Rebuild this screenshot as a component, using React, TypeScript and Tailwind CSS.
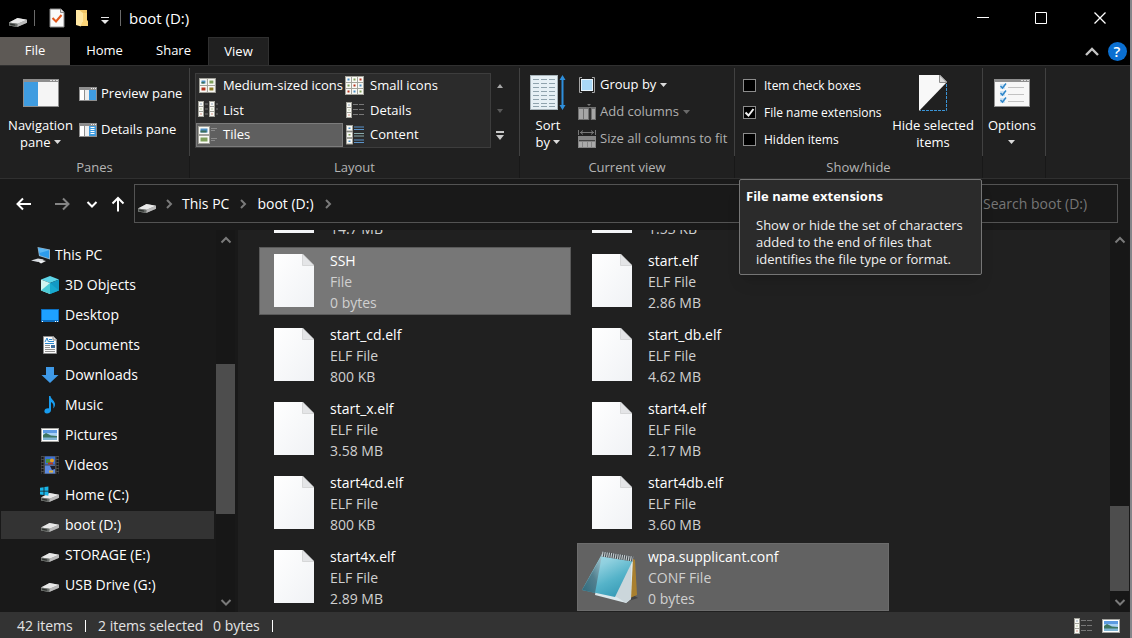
import React from "react";

type IconProps = { className?: string };

/* ---------- shared glyphs ---------- */

function DriveIcon({ windows = false }: { windows?: boolean }) {
  return (
    <svg width="20" height="18" viewBox="0 0 20 18" aria-hidden="true">
      <path d="M1 11.5 9.5 7l9.500 1.800v3L9 16 1 14.500z" fill="#8a8a8a" />
      <path d="M1 11.500 9.500 7l9.500 1.800L9.500 12.800z" fill="#e9e9e9" />
      <path d="M9.500 12.800 19 8.800v3L9.200 16z" fill="#b9b9b9" />
      <path d="M1 11.500l8.500 1.300L9.200 16 1 14.600z" fill="#6b6f6c" />
      <path d="M2.200 12.600l5 .8v1.400l-5-.9z" fill="#2c302d" />
      {windows && (
        <path d="M0 1.800 3.600 1.200v3.600H0zM4.400 1.100 8.400.5v4.300h-4zM0 5.600h3.600v3.500L0 8.600zM4.400 5.600h4v4.100l-4-.6z" fill="#19b5e8" />
      )}
    </svg>
  );
}

function Caret({ className = "fill-[#dcdcdc]" }: IconProps) {
  return (
    <svg width="7" height="4" viewBox="0 0 7 4" className={`inline-block ${className}`} aria-hidden="true">
      <path d="M0 0h7L3.500 4z" />
    </svg>
  );
}

type Direction = "up" | "down" | "left" | "right";
const chevronPath: Record<Direction, string> = {
  up: "M1.500 7.500 6 3l4.500 4.500",
  down: "M1.500 4 6 8.500 10.500 4",
  left: "M8 1.500 3.500 6 8 10.500",
  right: "M4 2l4 4-4 4",
};

function Chevron({ dir, className = "stroke-[#7a7a7a]" }: { dir: Direction; className?: string }) {
  return (
    <svg width="12" height="12" viewBox="0 0 12 12" className={className} fill="none" strokeWidth="2" aria-hidden="true">
      <path d={chevronPath[dir]} />
    </svg>
  );
}

function Thumb({ x, y, w, h, tone, scene = false }: { x: number; y: number; w: number; h: number; tone: string; scene?: boolean }) {
  return (
    <g>
      <rect x={x} y={y} width={w} height={h} fill="#fafaf6" stroke="#a3a39b" strokeWidth="1" />
      <rect x={x + 2} y={y + 2} width={w - 4} height={h - 4} fill={tone} />
      {scene && <rect x={x + 2} y={y + h / 2} width={w - 5} height={h / 2 - 2} fill="#3d6f58" />}
    </g>
  );
}

/* ---------- title bar ---------- */

function PropertiesIcon() {
  return (
    <svg width="16" height="20" viewBox="0 0 16 20" aria-hidden="true">
      <path d="M1 1h11l3 3v15H1z" fill="#fafafa" stroke="#8b8b8b" />
      <path d="M11.500 1v3.500H15" fill="#ddd" stroke="#8b8b8b" />
      <path d="M3.500 10l3.500 3.500L12.500 7" fill="none" stroke="#e2571c" strokeWidth="2" />
    </svg>
  );
}

function FolderIcon() {
  return (
    <svg width="14" height="18" viewBox="0 0 14 18" aria-hidden="true">
      <path d="M4 1h8v10l1 1v5H4z" fill="#f0c566" />
      <path d="M1 1h3l4 3v9l-1 1-1 3.500L1 16z" fill="#ffe7a3" />
      <path d="M8 4v9l-1 1v3h6v-4l-1-1V4z" fill="#fbd578" />
    </svg>
  );
}

function TitleBar() {
  return (
    <header className="flex h-[37px] items-center bg-black pb-px pl-2">
      <span className="flex pt-1">
        <DriveIcon />
      </span>
      <span className="ml-[6px] h-4 w-px bg-[#6a6a6a]" />
      <button aria-label="Properties" className="ml-[14px] flex">
        <PropertiesIcon />
      </button>
      <button aria-label="New folder" className="ml-[10px] flex">
        <FolderIcon />
      </button>
      <button aria-label="Customize Quick Access Toolbar" className="flex w-[31px] justify-center pt-1">
        <svg width="8" height="8" viewBox="0 0 8 8" fill="#e8e8e8">
          <path d="M0 1h8v1H0zM0 4h8L4 8z" />
        </svg>
      </button>
      <span className="h-4 w-px bg-[#6a6a6a]" />
      <h1 className="ml-2 flex-1 text-[15px] leading-5">boot (D:)</h1>
      <button aria-label="Minimize" className="flex w-[59px] justify-center">
        <svg width="12" height="12"><path d="M0 5.500h12" stroke="#fff" /></svg>
      </button>
      <button aria-label="Maximize" className="flex w-[58px] justify-center">
        <svg width="12" height="12"><path d="M.5.5h11v11H.5z" stroke="#fff" fill="none" /></svg>
      </button>
      <button aria-label="Close" className="flex w-[60px] justify-center">
        <svg width="12" height="12"><path d="M.5.5l11 11M11.500.5l-11 11" stroke="#fff" strokeWidth="1.300" /></svg>
      </button>
    </header>
  );
}

function Tabs() {
  return (
    <nav className="flex h-[28px] items-stretch bg-black text-[13px]">
      <button className="w-[70px] bg-[#5d5955]">File</button>
      <button className="w-[69px]">Home</button>
      <button className="w-[69px]">Share</button>
      <button className="-mb-px w-[61px] border border-b-0 border-[#303030] bg-[#202020]">View</button>
      <span className="flex-1" />
      <button aria-label="Collapse the ribbon" className="flex w-7 items-center justify-center">
        <svg width="14" height="9" viewBox="0 0 14 9" fill="none" stroke="#c4c4c4" strokeWidth="2.400">
          <path d="M1 8l6-6 6 6" />
        </svg>
      </button>
      <button aria-label="Help" className="mr-[2px] flex w-[22px] items-center justify-center">
        <span className="flex size-[19px] items-center justify-center rounded-full bg-[#0a6fd1] text-[15px] font-semibold leading-none">?</span>
      </button>
    </nav>
  );
}

/* ---------- ribbon ---------- */

function PaneIcon({ kind }: { kind: "nav" | "preview" | "details" }) {
  if (kind === "nav") {
    return (
      <svg width="36" height="28" viewBox="0 0 36 28" aria-hidden="true">
        <rect width="36" height="28" fill="#8e8e8e" />
        <path d="M27 1h2v1h-2zM30 1h2v1h-2zM33 1h2v1h-2z" fill="#ddd" />
        <rect x="1" y="3" width="14" height="24" fill="#3f9ce0" />
        <rect x="15" y="3" width="20" height="24" fill="#f5f5f5" />
      </svg>
    );
  }
  return (
    <svg width="18" height="14" viewBox="0 0 18 14" aria-hidden="true">
      <rect width="18" height="14" fill="#8e8e8e" />
      <path d="M12 1h1v1h-1zM14 1h1v1h-1zM16 1h1v1h-1z" fill="#eee" />
      <rect x="1" y="3" width="4" height="10" fill="#fff" />
      <rect x="6" y="3" width="4" height="10" fill="#eee" />
      <rect x="10" y="3" width="7" height="10" fill="#3f9ce0" />
      {kind === "details" && <path d="M11.500 4.500h4M11.500 6.500h4M11.500 8.500h4M11.500 10.500h4" stroke="#fff" />}
    </svg>
  );
}

const BLUE = "#4d8fc4";
const GREEN = "#7fa05a";
const RED = "#b5341f";

function ViewIcon({ kind }: { kind: string }) {
  return (
    <svg width="20" height="20" viewBox="0 0 20 20" aria-hidden="true">
      {kind === "medium" && (
        <>
          <Thumb x={1.5} y={2.5} w={8} h={7} tone={BLUE} scene />
          <Thumb x={9.5} y={2.5} w={8} h={7} tone={GREEN} />
          <Thumb x={1.5} y={9.5} w={8} h={7} tone={RED} />
          <Thumb x={9.5} y={9.5} w={8} h={7} tone="#8c7a24" />
        </>
      )}
      {kind === "small" &&
        [0, 1, 2].map((r) =>
          [0, 1, 2].map((c) => (
            <Thumb key={`${r}${c}`} x={0.5 + c * 6} y={0.5 + r * 6} w={6} h={6} tone={[BLUE, GREEN, RED][(r + c) % 3]} />
          )),
        )}
      {kind === "list" &&
        [0, 1, 2].map((r) => (
          <g key={r}>
            <Thumb x={0.5} y={1.5 + r * 5} w={5} h={5} tone={["#3a5f8a", GREEN, RED][r]} />
            <Thumb x={11.5} y={1.5 + r * 5} w={5} h={5} tone={["#3a5f8a", GREEN, RED][r]} />
            <path d={`M7 ${4 + r * 5}h3M18 ${4 + r * 5}h2`} stroke="#777" />
          </g>
        ))}
      {kind === "details" &&
        [0, 1, 2].map((r) => (
          <g key={r}>
            <Thumb x={1.5} y={2.5 + r * 5} w={5} h={5} tone={["#3a5f8a", GREEN, RED][r]} />
            <path d={`M8 ${4.5 + r * 5}h5M14 ${4.5 + r * 5}h5`} stroke="#777" />
          </g>
        ))}
      {kind === "tiles" && (
        <>
          <Thumb x={0.5} y={1.5} w={11} h={8} tone={BLUE} scene />
          <Thumb x={0.5} y={10.5} w={11} h={8} tone={GREEN} />
          <path d="M13 3.500h6M13 5.500h4M13 13.500h6M13 15.500h4" stroke="#8a8a8a" />
        </>
      )}
      {kind === "content" &&
        [0, 1, 2].map((r) => (
          <g key={r}>
            <Thumb x={1.5} y={0.5 + r * 6.5} w={6} h={5.5} tone={[BLUE, GREEN, BLUE][r]} />
            <path d={`M9 ${2 + r * 6.5}h10M9 ${4.5 + r * 6.5}h10`} stroke={r === 1 ? "#8aa" : "#5b93c9"} />
          </g>
        ))}
    </svg>
  );
}

function SortIcon() {
  return (
    <svg width="36" height="36" viewBox="0 0 36 36" aria-hidden="true">
      <rect x=".5" y=".5" width="27" height="34" fill="#e6f0f5" stroke="#a8b4ba" />
      {[4, 8, 12, 16, 20, 24, 28, 31].map((y) => (
        <path key={y} d={`M3 ${y + 0.5}h6M11 ${y + 0.5}h6M19 ${y + 0.5}h6`} stroke="#8fa3ad" />
      ))}
      <path d="M32.500 3v29" stroke="#2e8fdc" strokeWidth="2" />
      <path d="M29.500 5l3-5 3 5zM29.500 30l3 5 3-5z" fill="#2e8fdc" />
    </svg>
  );
}

function GroupByIcon() {
  return (
    <svg width="18" height="18" viewBox="0 0 18 18" aria-hidden="true">
      <path d="M4 1.500H1.500v15H4M14 1.500h2.500v15H14" fill="none" stroke="#a5a5a5" />
      <rect x="3.500" y="3.500" width="11" height="11" fill="#a9d8f7" stroke="#e8f4fc" />
    </svg>
  );
}

function AddColumnsIcon() {
  return (
    <svg width="18" height="18" viewBox="0 0 18 18" aria-hidden="true">
      <path d="M9 1h4l-2 2z" fill="#777" />
      <rect y="4" width="18" height="13" fill="#707070" />
      <path d="M1 6h4v10H1zM6 6h4v10H6zM14 6h3v10h-3z" fill="#a6a6a6" />
      <path d="M11 5h2v12h-2z" fill="#333" />
    </svg>
  );
}

function SizeColumnsIcon() {
  return (
    <svg width="18" height="18" viewBox="0 0 18 18" aria-hidden="true">
      <path d="M.5 0v5M17.500 0v5M2 2.500h14M5 .5l-2.500 2L5 4.500M13 .5l2.500 2-2.500 2" fill="none" stroke="#777" />
      <rect y="6" width="18" height="12" fill="#858585" />
      <path d="M1 10.500h16" stroke="#444" />
      <path d="M1 12h3v5H1zM5 12h4v5H5zM10 12h3v5h-3zM14 12h3v5h-3z" fill="#aaa" />
    </svg>
  );
}

function HideIcon() {
  return (
    <svg width="28" height="36" viewBox="0 0 28 36" aria-hidden="true">
      <path d="M0 0h21l7 7L0 36z" fill="#f8f8f8" />
      <path d="M20.500 0v7.500H28z" fill="#d9d9d9" stroke="#8e8e8e" />
      <path d="M27.500 9v26.500H1" fill="none" stroke="#3b94d6" strokeDasharray="3 1" />
    </svg>
  );
}

function OptionsIcon() {
  return (
    <svg width="36" height="28" viewBox="0 0 36 28" aria-hidden="true">
      <rect width="36" height="28" fill="#8e8e8e" />
      <path d="M27 1h2v1h-2zM30 1h2v1h-2zM33 1h2v1h-2z" fill="#ddd" />
      <rect x="1" y="3" width="34" height="24" fill="#f7f7f7" />
      {[5, 12, 19].map((y) => (
        <g key={y}>
          <rect x="6" y={y} width="5" height="5" fill="#cfe3f3" />
          <path d={`M6.500 ${y + 2}l2 2L12 ${y - 0.5}`} fill="none" stroke="#2e86c9" strokeWidth="1.500" />
          <path d={`M14 ${y + 3.5}h16`} stroke="#c2c2c2" />
        </g>
      ))}
    </svg>
  );
}

function Group({ label, className = "", children }: { label: string; className?: string; children: React.ReactNode }) {
  return (
    <section aria-label={label || "Options"} className={`relative flex flex-col ${className}`}>
      <div className="mt-[2px] flex h-[88px] border-r border-[#414141]">{children}</div>
      <p className="h-[22px] border-r border-[#181818] text-center text-[13px] leading-[22px] text-[#b4b4b4]">{label}</p>
    </section>
  );
}

function BigButton({ icon, className = "", children }: { icon: React.ReactNode; className?: string; children: React.ReactNode }) {
  return (
    <button className={`flex shrink-0 flex-col items-center leading-[17px] ${className}`}>
      <span className="flex h-[37px] items-center">{icon}</span>
      <span className="mt-[6px] whitespace-nowrap">{children}</span>
    </button>
  );
}

const layouts = [
  ["medium", "Medium-sized icons"],
  ["small", "Small icons"],
  ["list", "List"],
  ["details", "Details"],
  ["tiles", "Tiles"],
  ["content", "Content"],
];

function CheckRow({ id, label, checked = false }: { id: string; label: string; checked?: boolean }) {
  return (
    <div className="flex h-[27px] items-center">
      <span className="grid size-[13px]">
        <input id={id} type="checkbox" defaultChecked={checked} className="peer col-start-1 row-start-1 size-[13px] appearance-none border border-[#8c8c8c] bg-black" />
        <svg viewBox="0 0 13 13" className="pointer-events-none invisible col-start-1 row-start-1 size-[13px] peer-checked:visible" fill="none" stroke="#f0f0f0" strokeWidth="2">
          <path d="M2.500 6.500l3 3 5-6.500" />
        </svg>
      </span>
      <label htmlFor={id} className="pl-2 text-xs whitespace-nowrap">{label}</label>
    </div>
  );
}

function Tooltip() {
  return (
    <div role="tooltip" className="absolute left-1 top-[113px] z-10 h-24 w-[243px] rounded-xs border border-[#767676] bg-[#2b2b2b] px-[6px] pt-2 text-[13px] leading-[17px] shadow-lg">
      <p className="font-bold">File name extensions</p>
      <p className="mt-3 pl-[10px] whitespace-nowrap text-[#f0f0f0]">
        Show or hide the set of characters
        <br />
        added to the end of files that
        <br />
        identifies the file type or format.
      </p>
    </div>
  );
}

function Ribbon() {
  return (
    <div className="flex h-[114px] border-y border-[#303030] bg-[#202020] text-[13px]">
      <Group label="Panes" className="w-[190px]">
        <BigButton className="w-[79px] pt-[6px] pl-[2px]" icon={<PaneIcon kind="nav" />}>
          Navigation
          <br />
          pane <Caret className="mb-1 fill-[#dcdcdc]" />
        </BigButton>
        <div className="flex flex-col pt-2">
          <button className="flex h-9 items-center gap-1 whitespace-nowrap"><PaneIcon kind="preview" />Preview pane</button>
          <button className="flex h-9 items-center gap-1 whitespace-nowrap"><PaneIcon kind="details" />Details pane</button>
        </div>
      </Group>

      <Group label="Layout" className="w-[330px]">
        <div className="ml-[5px] mt-[5px] grid h-[75px] w-[296px] grid-cols-2 grid-rows-3 border border-[#3d3d3d] bg-[#2b2b2b]">
          {layouts.map(([kind, label]) => (
            <button
              key={kind}
              className={
                kind === "tiles"
                  ? "flex items-center gap-[5px] border border-[#7c7c7c] bg-[#5f5f5f] pl-px whitespace-nowrap"
                  : "flex items-center gap-[5px] pl-[2px] whitespace-nowrap"
              }
            >
              <ViewIcon kind={kind} />
              {label}
            </button>
          ))}
        </div>
        <div className="mt-[5px] flex h-[75px] w-[18px] flex-col">
          <button aria-label="Previous row" className="flex flex-1 items-center justify-center">
            <svg width="6" height="4" fill="#a8a8a8"><path d="M0 4l3-4 3 4z" /></svg>
          </button>
          <button aria-label="Next row" className="flex flex-1 items-center justify-center">
            <svg width="6" height="4" fill="#5a5a5a"><path d="M0 0h6L3 4z" /></svg>
          </button>
          <button aria-label="More layouts" className="flex flex-1 items-center justify-center">
            <svg width="8" height="9" fill="#c8c8c8"><path d="M0 0h8v2H0zM0 4h8L4 9z" /></svg>
          </button>
        </div>
      </Group>

      <Group label="Current view" className="w-[215px]">
        <BigButton className="w-[56px] pt-[6px]" icon={<SortIcon />}>
          Sort
          <br />
          by <Caret className="mb-1 fill-[#dcdcdc]" />
        </BigButton>
        <div className="flex flex-col pt-[3px] pl-[2px]">
          <button className="flex h-[27px] items-center gap-1 whitespace-nowrap"><GroupByIcon />Group by <Caret /></button>
          <button disabled className="flex h-[27px] items-center gap-1 whitespace-nowrap text-[#b0b0b0]"><AddColumnsIcon />Add columns <Caret className="fill-[#6a6a6a]" /></button>
          <button disabled className="flex h-[27px] items-center gap-1 whitespace-nowrap text-[#b0b0b0]"><SizeColumnsIcon />Size all columns to fit</button>
        </div>
      </Group>

      <Group label="Show/hide" className="w-[248px]">
        <div className="flex w-[152px] flex-col pl-2 pt-1">
          <CheckRow id="item-boxes" label="Item check boxes" />
          <CheckRow id="extensions" label="File name extensions" checked />
          <CheckRow id="hidden-items" label="Hidden items" />
        </div>
        <BigButton className="w-[92px] pt-[6px]" icon={<HideIcon />}>
          Hide selected
          <br />
          items
        </BigButton>
        <Tooltip />
      </Group>

      <Group label="" className="w-[63px]">
        <BigButton className="w-[58px] pt-[6px]" icon={<OptionsIcon />}>
          Options
          <br />
          <Caret className="mb-1 fill-[#dcdcdc]" />
        </BigButton>
      </Group>
    </div>
  );
}

/* ---------- address bar ---------- */

function Arrow({ className, d }: { className: string; d: string }) {
  return (
    <svg width="16" height="16" viewBox="0 0 16 16" fill="none" strokeWidth="2" className={className} aria-hidden="true">
      <path d={d} />
    </svg>
  );
}

function AddressBar() {
  return (
    <div className="flex h-[50px] items-start bg-[#191919] pr-3 pt-[5px] text-sm">
      <div className="flex h-[39px] w-[134px] items-center pl-4">
        <button aria-label="Back" className="flex"><Arrow className="stroke-white" d="M15 8H1.500M7 2.500 1.500 8 7 13.500" /></button>
        <button aria-label="Forward" disabled className="ml-[22px] flex"><Arrow className="stroke-[#858585]" d="M1 8h13.500M9 2.500 14.500 8 9 13.500" /></button>
        <button aria-label="Recent locations" className="ml-4 flex"><Chevron dir="down" className="stroke-white" /></button>
        <button aria-label="Up" className="ml-3 flex"><Arrow className="stroke-white" d="M8 15.500V2M2.500 7.500 8 2l5.500 5.500" /></button>
      </div>
      <div className="flex h-[39px] flex-1 items-center border border-[#535353] pl-[2px]">
        <span className="flex pt-1"><DriveIcon /></span>
        <span className="ml-[6px]"><Chevron dir="right" /></span>
        <button className="ml-[7px]">This PC</button>
        <span className="ml-2"><Chevron dir="right" /></span>
        <button className="ml-2">boot (D:)</button>
        <span className="ml-2"><Chevron dir="right" /></span>
      </div>
      <input
        type="search"
        aria-label="Search boot (D:)"
        placeholder="Search boot (D:)"
        className="ml-2 h-[39px] w-[170px] border border-[#535353] bg-transparent pl-[34px] placeholder:text-[#767676]"
      />
    </div>
  );
}

/* ---------- navigation pane ---------- */

function PcIcon() {
  return (
    <svg width="20" height="20" viewBox="0 0 20 20" aria-hidden="true">
      <path d="M6.500 2l12.500 2.500v10L8 11z" fill="#8fb4cc" />
      <path d="M7.500 3 18 5.300v8L8.800 10.300z" fill="#2d9cec" />
      <path d="M7.500 3 18 5.300 8.500 8z" fill="#5bb8f5" />
      <path d="M0 15.500l7-2 6 1-6 2.500z" fill="#d9dde2" />
      <path d="M7 16.500l4-1.500 4 1-5 2.500z" fill="#eef0f2" />
    </svg>
  );
}

function CubeIcon() {
  return (
    <svg width="20" height="20" viewBox="0 0 20 20" aria-hidden="true">
      <path d="M10 1l9 3.500-9 3.500-9-3.500z" fill="#5fd6e8" />
      <path d="M1 4.500 10 8v11l-9-3.500z" fill="#d2f5f0" />
      <path d="M19 4.500 10 8v11l9-3.500z" fill="#1399c4" />
      <path d="M10 8v11l-9-3.500z" fill="#4ccbd6" />
      <path d="M10 8l9 7.500-9 3.500z" fill="#18a9cf" />
    </svg>
  );
}

function DesktopIcon() {
  return (
    <svg width="20" height="20" viewBox="0 0 20 20" aria-hidden="true">
      <rect x="1" y="4" width="18" height="13" fill="#0d6fc0" />
      <rect x="2" y="5" width="16" height="10" fill="#1ea1ff" />
      <path d="M2 16h1v1H2zM15 16h1v1h-1zM17 16h1v1h-1z" fill="#fff" />
    </svg>
  );
}

function DocumentsIcon() {
  return (
    <svg width="20" height="20" viewBox="0 0 20 20" aria-hidden="true">
      <path d="M3.500 1.500h10l3 3v14h-13z" fill="#fbfbfb" stroke="#8f8f8f" />
      <path d="M13 1.500v3.500h3.500" fill="#ddd" stroke="#8f8f8f" />
      <path d="M5 7l2-4 1.500 4M9 4.500h3M9 6.500h5M5 8.500h9" fill="none" stroke="#2a86cd" />
      <path d="M5 10.500h5M5 12.500h5M5 14.500h10M5 16.500h10" stroke="#909090" />
      <rect x="11" y="10" width="4" height="3" fill="#3f6f9e" />
    </svg>
  );
}

function DownloadsIcon() {
  return (
    <svg width="20" height="20" viewBox="0 0 20 20" aria-hidden="true">
      <path d="M6 2h8v8h4.500L10 18 1.500 10H6z" fill="#3f9ae8" />
    </svg>
  );
}

function MusicIcon() {
  return (
    <svg width="20" height="20" viewBox="0 0 20 20" aria-hidden="true">
      <path d="M9 1h1.500c.3 3.500 5 5 4.500 9-.2 1.500-.8 2.500-1.800 3.500C14 10 13 8 11 7v8c0 2-1.800 3.500-4 3.500S4 17 4.500 15.500 7 13 9 13.500z" fill="#189df0" />
    </svg>
  );
}

function PictureIcon() {
  return (
    <svg width="20" height="20" viewBox="0 0 20 20" aria-hidden="true">
      <rect x="1.500" y="3.500" width="17" height="13" fill="#fff" stroke="#a4a4a0" />
      <rect x="3" y="5" width="14" height="10" fill="#a9d2f5" />
      <path d="M3 5h14v3H3z" fill="#5d9be2" />
      <path d="M3 10l3-2 5 2.500 6 .5v2H3z" fill="#3d7560" />
      <path d="M3 12.500h14V15H3z" fill="#7fb4d4" />
    </svg>
  );
}

function VideoIcon() {
  return (
    <svg width="20" height="20" viewBox="0 0 20 20" aria-hidden="true">
      <rect x="1" y="1" width="18" height="18" fill="#4a4a4a" />
      <path d="M2.500 2v17M17.500 2v17" stroke="#161616" strokeWidth="2" strokeDasharray="2 1" />
      <rect x="5" y="1.500" width="10" height="8" fill="#3b6fd0" />
      <rect x="5" y="10.500" width="10" height="8" fill="#5c8ae0" />
      <path d="M6 4h4v4H6z" fill="#4a8f3c" />
      <circle cx="12" cy="5.500" r="2" fill="#e8a21d" />
      <path d="M8 7.500h5v2H8z" fill="#b43a24" />
      <path d="M10 11h5v3l-3 1z" fill="#1f1f2a" />
      <path d="M9 15.500h4v2H9z" fill="#e0b03a" />
    </svg>
  );
}

const navItems: { label: string; icon: React.ReactNode; root?: boolean; active?: boolean }[] = [
  { label: "This PC", icon: <PcIcon />, root: true },
  { label: "3D Objects", icon: <CubeIcon /> },
  { label: "Desktop", icon: <DesktopIcon /> },
  { label: "Documents", icon: <DocumentsIcon /> },
  { label: "Downloads", icon: <DownloadsIcon /> },
  { label: "Music", icon: <MusicIcon /> },
  { label: "Pictures", icon: <PictureIcon /> },
  { label: "Videos", icon: <VideoIcon /> },
  { label: "Home (C:)", icon: <DriveIcon windows /> },
  { label: "boot (D:)", icon: <DriveIcon />, active: true },
  { label: "STORAGE (E:)", icon: <DriveIcon /> },
  { label: "USB Drive (G:)", icon: <DriveIcon /> },
];

function ScrollBar({ before, size, after }: { before: number; size: number; after: number }) {
  return (
    <div className="flex w-[19px] shrink-0 flex-col bg-[#171717]">
      <button aria-label="Scroll up" className="flex h-[21px] items-center justify-center"><Chevron dir="up" /></button>
      <span style={{ flexGrow: before }} />
      <span className="bg-[#4d4d4d]" style={{ flexGrow: size }} />
      <span style={{ flexGrow: after }} />
      <button aria-label="Scroll down" className="flex h-[21px] items-center justify-center"><Chevron dir="down" /></button>
    </div>
  );
}

function NavigationPane() {
  return (
    <aside className="flex w-[238px] shrink-0 border-r-[3px] border-[#191919] bg-[#191919] text-sm">
      <ul className="min-w-0 flex-1 overflow-hidden pl-px pr-[2px] pt-[10px]">
        {navItems.map((item) => (
          <li key={item.label} className="h-[30px] py-px">
            <a
              href="#"
              className={
                item.root
                  ? "flex h-7 items-center gap-1 pl-[30px]"
                  : item.active
                    ? "flex h-7 items-center gap-[5px] bg-[#333333] pl-[39px]"
                    : "flex h-7 items-center gap-[5px] pl-[39px]"
              }
            >
              <span className="flex w-5">{item.icon}</span>
              {item.label}
            </a>
          </li>
        ))}
      </ul>
      <ScrollBar before={113} size={150} after={77} />
    </aside>
  );
}

/* ---------- file list ---------- */

function FileIcon() {
  return (
    <svg width="40" height="53" viewBox="0 0 40 53" aria-hidden="true">
      <defs>
        <linearGradient id="sheet" x1="0" y1="0" x2="1" y2="1">
          <stop offset="0" stopColor="#ffffff" />
          <stop offset="1" stopColor="#f0f2f5" />
        </linearGradient>
      </defs>
      <path d="M0 0h28.500L40 11.500V53H0z" fill="url(#sheet)" />
      <path d="M28.500 0v11.500H40z" fill="#e4e5e7" stroke="#cfd0d2" strokeWidth=".8" />
    </svg>
  );
}

function NotepadIcon() {
  return (
    <svg width="56" height="56" viewBox="0 0 56 56" aria-hidden="true">
      <defs>
        <linearGradient id="cover" x1="0" y1="0" x2=".6" y2="1">
          <stop offset="0" stopColor="#a9dde8" />
          <stop offset=".35" stopColor="#8fd0df" />
          <stop offset=".7" stopColor="#55b3c9" />
          <stop offset="1" stopColor="#3a9db8" />
        </linearGradient>
        <linearGradient id="fold" x1="1" y1="0" x2="0" y2="1">
          <stop offset="0" stopColor="#a5ccd6" />
          <stop offset=".5" stopColor="#52808f" />
          <stop offset="1" stopColor="#2f6a7c" />
        </linearGradient>
      </defs>
      <path d="M40 54l16-5-5-3z" fill="#444" />
      <path d="M50 9l3 2 2 35-7 3z" fill="#a9802f" />
      <path d="M20 5l31 4-2 41-5 4-31-8z" fill="#dce8ec" />
      <path d="M49 13 33 47l11 7 5-4z" fill="#cbd6db" />
      <path d="M20 5l31 6-18 37-33-7z" fill="url(#cover)" />
      <path d="M20 6l-7 38-13-3z" fill="url(#fold)" />
      <path d="M20 5l31 5" stroke="#3f474b" strokeWidth="5" />
      <path d="M20 5l31 5" stroke="#c4cacd" strokeWidth="5" strokeDasharray="1.200 1" />
    </svg>
  );
}

type FileEntry = { name?: string; type?: string; size: string; state?: "focused" | "selected"; notepad?: boolean };

const files: FileEntry[] = [
  { size: "14.7 MB" },
  { size: "1.53 KB" },
  { name: "SSH", type: "File", size: "0 bytes", state: "focused" },
  { name: "start.elf", type: "ELF File", size: "2.86 MB" },
  { name: "start_cd.elf", type: "ELF File", size: "800 KB" },
  { name: "start_db.elf", type: "ELF File", size: "4.62 MB" },
  { name: "start_x.elf", type: "ELF File", size: "3.58 MB" },
  { name: "start4.elf", type: "ELF File", size: "2.17 MB" },
  { name: "start4cd.elf", type: "ELF File", size: "800 KB" },
  { name: "start4db.elf", type: "ELF File", size: "3.60 MB" },
  { name: "start4x.elf", type: "ELF File", size: "2.89 MB" },
  { name: "wpa.supplicant.conf", type: "CONF File", size: "0 bytes", state: "selected", notepad: true },
];

const tileTone = {
  focused: "border-[#5a5a5a] bg-[#777777]",
  selected: "border-[#6c6c6c] bg-[#626262]",
  none: "border-transparent",
};

function FileList() {
  return (
    <main className="flex min-w-0 flex-1 flex-col justify-end overflow-hidden bg-[#202020] pb-px pl-[21px] text-sm leading-[21px]">
      <ul className="grid shrink-0 grid-cols-[312px_312px] gap-[6px]">
        {files.map((f, i) => (
          <li key={i} className={`flex h-[68px] items-end border pb-px ${tileTone[f.state ?? "none"]}`}>
            <span className="flex h-full w-[70px] shrink-0 items-center pl-[14px]">
              {f.notepad ? <span className="-ml-[10px] flex"><NotepadIcon /></span> : <FileIcon />}
            </span>
            <div className="text-[#d0d0d0]">
              {f.name && <p className="text-white">{f.name}</p>}
              {f.type && <p>{f.type}</p>}
              <p>{f.size}</p>
            </div>
          </li>
        ))}
      </ul>
    </main>
  );
}

function StatusBar() {
  return (
    <footer className="flex h-[26px] shrink-0 items-center bg-[#333333] pt-px pl-[17px] pr-[9px] text-sm leading-5 text-[#e4e4e4]">
      <span className="w-[68px] whitespace-nowrap">42 items</span>
      <span className="h-3 w-px bg-white" />
      <span className="ml-3 w-[115px] whitespace-nowrap">2 items selected</span>
      <span className="w-[59px] whitespace-nowrap">0 bytes</span>
      <span className="h-3 w-px bg-white" />
      <span className="flex-1" />
      <button aria-label="Details view" className="mr-2 flex"><ViewIcon kind="details" /></button>
      <button aria-label="Large icons view" className="flex"><PictureIcon /></button>
    </footer>
  );
}

export default function App() {
  return (
    <div className="flex h-screen flex-col overflow-hidden border-r-2 border-[#85858a] bg-[#191919] font-['Open_Sans','Noto_Sans',sans-serif] text-white">
      <TitleBar />
      <Tabs />
      <Ribbon />
      <AddressBar />
      <div className="flex min-h-0 flex-1 border-t border-[#191919] pr-px">
        <NavigationPane />
        <FileList />
        <ScrollBar before={255} size={85} after={0} />
      </div>
      <StatusBar />
    </div>
  );
}
